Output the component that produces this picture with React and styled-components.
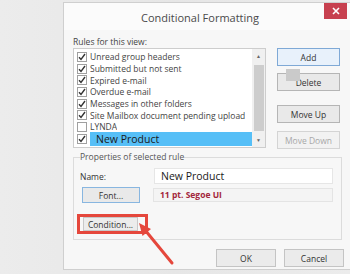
import React from "react";
import styled, { createGlobalStyle } from "styled-components";

const rules = [
  { label: "Unread group headers", checked: true },
  { label: "Submitted but not sent", checked: true },
  { label: "Expired e-mail", checked: true },
  { label: "Overdue e-mail", checked: true },
  { label: "Messages in other folders", checked: true },
  { label: "Site Mailbox document pending upload", checked: true },
  { label: "LYNDA", checked: false },
  { label: "New Product", checked: true, editing: true },
];

const App = () => {
  return (
    <Page>
      <GlobalStyle />
      <Dialog>
        <TitleBar>
          <Title>Conditional Formatting</Title>
          <CloseButton>
            <svg width="8" height="8" viewBox="0 0 8 8">
              <path d="M1 1L7 7M7 1L1 7" stroke="#fff" strokeWidth="1.6" />
            </svg>
          </CloseButton>
        </TitleBar>
        <Body>
          <SmallLabel>Rules for this view:</SmallLabel>
          <MainRow>
            <ListBox>
              <Rows>
                {rules.map((r) => (
                  <Row key={r.label}>
                    <Check>
                      {r.checked && (
                        <svg width="8" height="8" viewBox="0 0 8 8">
                          <path d="M1 4.2L3 6.5L7 1" fill="none" stroke="#333" strokeWidth="1.4" />
                        </svg>
                      )}
                    </Check>
                    {r.editing ? (
                      <EditBox>{r.label}</EditBox>
                    ) : (
                      <RowText>{r.label}</RowText>
                    )}
                  </Row>
                ))}
              </Rows>
              <ScrollBar>
                <Arrow>▲</Arrow>
                <Thumb />
                <Arrow>▼</Arrow>
              </ScrollBar>
            </ListBox>
            <ButtonColumn>
              <SideButton $primary>Add</SideButton>
              <SideButton $gap={7}>
                Delete
                <Cursor />
              </SideButton>
              <SideButton $gap={14}>Move Up</SideButton>
              <SideButton $gap={8} disabled>
                Move Down
              </SideButton>
            </ButtonColumn>
          </MainRow>
          <Group>
            <Legend>Properties of selected rule</Legend>
            <FieldRow>
              <FieldLabel>Name:</FieldLabel>
              <TextBox>New Product</TextBox>
            </FieldRow>
            <FieldRow $gap={3}>
              <FontButton>Font...</FontButton>
              <FontSample>11 pt. Segoe UI</FontSample>
            </FieldRow>
            <Highlight>
              <ConditionButton>Condition...</ConditionButton>
            </Highlight>
          </Group>
          <Footer>
            <DialogButton>OK</DialogButton>
            <DialogButton>Cancel</DialogButton>
          </Footer>
        </Body>
      </Dialog>
      <Overlay width="350" height="274" viewBox="0 0 350 274">
        <line x1="172" y1="263" x2="145" y2="230" stroke="#e5473c" strokeWidth="3" strokeLinecap="round" />
        <polygon points="139,223 142.5,236 151,229" fill="#e5473c" />
      </Overlay>
    </Page>
  );
};

const GlobalStyle = createGlobalStyle`
  html, body {
    margin: 0;
    padding: 0;
    background: #ebebeb;
    overflow: hidden;
  }
  body {
    font-family: "Open Sans", "Noto Sans", sans-serif;
  }
`;

const Page = styled.div`
  position: relative;
  width: 350px;
  height: 274px;
  overflow: hidden;
  background: linear-gradient(90deg, #ececec 0%, #e6e6e6 50%, #ececec 100%);
`;

const Dialog = styled.div`
  margin: 2px 0 0 63px;
  width: 292px;
  height: 268px;
  background: #f7f7f7;
  border: 1px solid #cfcfcf;
  box-sizing: border-box;
  display: flex;
  flex-direction: column;
`;

const TitleBar = styled.div`
  height: 27px;
  display: flex;
  align-items: flex-start;
  background: #fbfbfb;
`;

const Title = styled.div`
  flex: 1;
  text-align: center;
  font-size: 11px;
  color: #4a4a4a;
  padding: 7px 0 0 12px;
`;

const CloseButton = styled.div`
  width: 23px;
  height: 16px;
  margin: 0 7px 0 0;
  background: #c7404f;
  display: flex;
  align-items: center;
  justify-content: center;
`;

const Body = styled.div`
  padding: 6px 0 0 9px;
  display: flex;
  flex-direction: column;
`;

const SmallLabel = styled.div`
  font-size: 8.5px;
  line-height: 12px;
  height: 12px;
  color: #444;
`;

const MainRow = styled.div`
  display: flex;
`;

const ListBox = styled.div`
  width: 193px;
  height: 100px;
  box-sizing: border-box;
  border: 1px solid #cdcdcd;
  background: #fff;
  display: flex;
`;

const Rows = styled.div`
  flex: 1;
  padding-top: 2px;
`;

const Row = styled.div`
  position: relative;
  height: 11.7px;
  display: flex;
  align-items: center;
  padding-left: 3px;
`;

const Check = styled.div`
  width: 8px;
  height: 8px;
  border: 1px solid #a0a0a0;
  background: #fff;
  display: flex;
  align-items: center;
  justify-content: center;
`;

const RowText = styled.div`
  margin-left: 3px;
  font-size: 8.5px;
  color: #444;
  white-space: nowrap;
  overflow: hidden;
`;

const EditBox = styled.div`
  position: absolute;
  left: 16px;
  right: 0;
  top: -1px;
  height: 14px;
  background: #56bff7;
  color: #1a1a1a;
  font-size: 10.5px;
  line-height: 14px;
  padding-left: 6px;
`;

const ScrollBar = styled.div`
  width: 13px;
  background: #f0f0f0;
  display: flex;
  flex-direction: column;
  align-items: center;
`;

const Arrow = styled.div`
  font-size: 5px;
  color: #666;
  height: 14px;
  line-height: 14px;
`;

const Thumb = styled.div`
  width: 10px;
  flex: 1;
  background: #cdcdcd;
  margin: 2px 0;
`;

const ButtonColumn = styled.div`
  margin-left: 11px;
  width: 63px;
  display: flex;
  flex-direction: column;
`;

const SideButton = styled.div`
  position: relative;
  margin-top: ${(p) => p.$gap || 0}px;
  height: 18px;
  box-sizing: border-box;
  border: 1px solid ${(p) => (p.$primary ? "#7fa9d6" : p.disabled ? "#d4d4d4" : "#b5b5b5")};
  background: ${(p) => (p.$primary ? "#e8f1fb" : p.disabled ? "#f2f2f2" : "#e9e9e9")};
  color: ${(p) => (p.disabled ? "#a8a8a8" : "#333")};
  font-size: 8.5px;
  display: flex;
  align-items: center;
  justify-content: center;
`;

const Cursor = styled.div`
  position: absolute;
  left: 8px;
  top: -5px;
  width: 14px;
  height: 12px;
  background: #cacaca;
`;

const Group = styled.fieldset`
  margin: 2px 0 0 0;
  width: 269px;
  height: 89px;
  box-sizing: border-box;
  border: 1px solid #dcdcdc;
  padding: 0 0 0 6px;
  min-width: 0;
`;

const Legend = styled.legend`
  padding: 0;
  margin-left: 0;
  font-size: 8.5px;
  line-height: 12px;
  color: #555;
`;

const FieldRow = styled.div`
  margin-top: ${(p) => (p.$gap != null ? p.$gap : 5)}px;
  display: flex;
  align-items: center;
`;

const FieldLabel = styled.div`
  width: 74px;
  font-size: 8.5px;
  color: #333;
`;

const TextBox = styled.div`
  width: 179px;
  height: 16px;
  box-sizing: border-box;
  background: #fff;
  border: 1px solid #e6e6e6;
  font-size: 10.5px;
  line-height: 14px;
  padding-left: 6px;
  color: #1a1a1a;
`;

const FontButton = styled.div`
  margin-left: 2px;
  width: 58px;
  height: 16px;
  box-sizing: border-box;
  border: 1px solid #88b6e0;
  background: #e9e9e9;
  font-size: 8.5px;
  color: #333;
  display: flex;
  align-items: center;
  justify-content: center;
`;

const FontSample = styled.div`
  margin-left: 13px;
  width: 180px;
  height: 14px;
  box-sizing: border-box;
  border: 1px solid #e4e4e4;
  background: #f4f4f4;
  font-size: 8.5px;
  font-weight: 700;
  color: #a3263b;
  line-height: 12px;
  padding-left: 6px;
`;

const Highlight = styled.div`
  margin: 11px 0 0 -3px;
  align-self: flex-start;
  width: max-content;
  border: 3px solid #e5473c;
  padding: 0 7px 0 3px;
`;

const ConditionButton = styled.div`
  width: 55px;
  height: 14px;
  box-sizing: border-box;
  border: 1px solid #c8c8c8;
  background: #ececec;
  font-size: 8.5px;
  color: #333;
  display: flex;
  align-items: center;
  justify-content: center;
`;

const Footer = styled.div`
  margin: 9px 10px 0 0;
  display: flex;
  justify-content: flex-end;
  gap: 8px;
`;

const DialogButton = styled.div`
  width: 60px;
  height: 18px;
  box-sizing: border-box;
  border: 1px solid #c4c4c4;
  background: #ebebeb;
  font-size: 8.5px;
  color: #333;
  display: flex;
  align-items: center;
  justify-content: center;
`;

const Overlay = styled.svg`
  position: absolute;
  left: 0;
  top: 0;
  pointer-events: none;
`;

export default App;
